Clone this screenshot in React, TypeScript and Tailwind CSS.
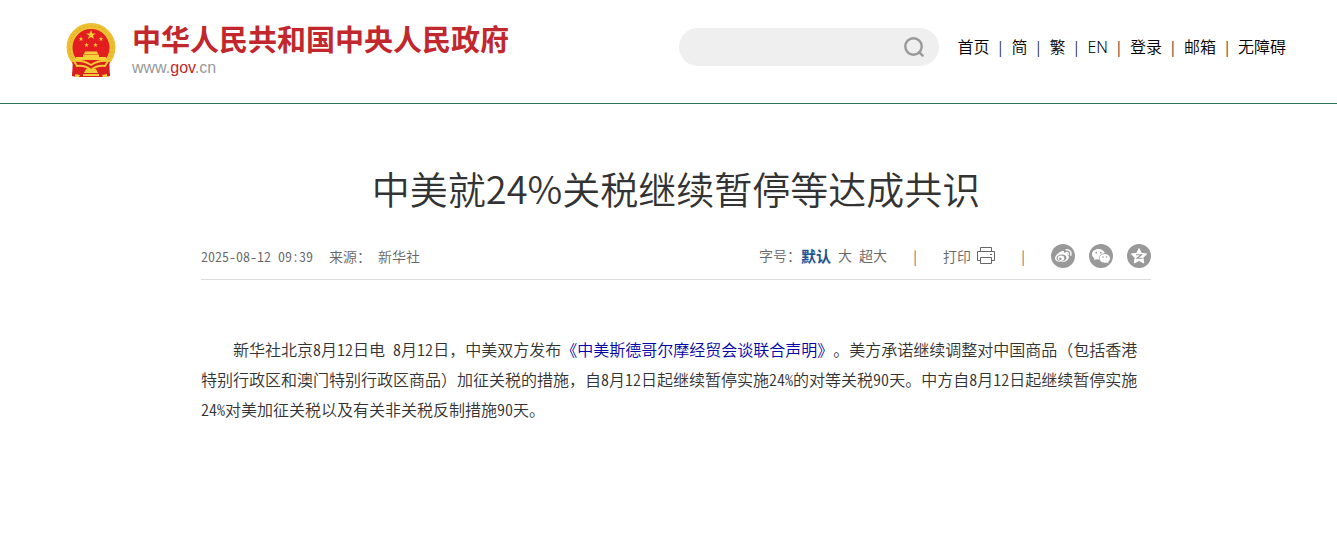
import type { ReactNode } from "react";

const navItems = ["首页", "简", "繁", "EN", "登录", "邮箱", "无障碍"];

const fontSizes = [
  { label: "默认", active: true },
  { label: "大", active: false },
  { label: "超大", active: false },
];

function star(cx: number, cy: number, r: number) {
  return Array.from({ length: 10 }, (_, i) => {
    const radius = i % 2 === 0 ? r : r * 0.4;
    const angle = (Math.PI / 5) * i - Math.PI / 2;
    return `${cx + radius * Math.cos(angle)},${cy + radius * Math.sin(angle)}`;
  }).join(" ");
}

// Digits, latin and spaces take half the width of a Chinese character
function HalfWidth({ text }: { text: string }) {
  return text.split(/([\d%:\- ]+)/).map((part, index) =>
    index % 2 === 1 ? (
      <span key={index} className="[font-feature-settings:'hwid']">
        {part}
      </span>
    ) : (
      part
    ),
  );
}

function Emblem() {
  return (
    <svg width="50" height="54" viewBox="0 0 50 54" aria-hidden="true" className="shrink-0">
      <path d="M7 36 L6 53 L13 54 L37 54 L44 53 L43 36Z" fill="#d81e1f" />
      <circle cx="25" cy="24.5" r="21.500" fill="#e41e20" stroke="#edc032" strokeWidth="6" />
      <circle cx="25" cy="24.5" r="21.500" fill="none" stroke="#dda824" strokeWidth="1" strokeDasharray="2 2" />
      <g fill="#f6d23a">
        <polygon points={star(25, 12, 5)} />
        <polygon points={star(15, 16, 2.4)} />
        <polygon points={star(35, 16, 2.4)} />
        <polygon points={star(20.5, 22, 2.4)} />
        <polygon points={star(29.5, 22, 2.4)} />
        <path d="M19 28.500 H31 L32 31 H18Z M17 31.500 H33 V35 H17Z M10 34 H40 V37 H10Z" />
      </g>
      <path d="M6 39 Q16 36 25 41 Q34 36 44 39 L42 44 L44 53 L37 54 H13 L6 53 L8 44Z" fill="#d81e1f" />
      <path
        d="M8 38 Q17 37 25 42 Q33 37 42 38 L39 43 Q31 42 25 47 Q19 42 11 43Z"
        fill="none"
        stroke="#f3cb35"
        strokeWidth="2"
      />
      <path d="M20 46 H30 L32 50 H18Z M17 51 H33 V53 H17Z M9 51 L14 52 L13 54 H9Z M41 51 L36 52 L37 54 H41Z" fill="#f3cb35" />
    </svg>
  );
}

function SearchIcon() {
  return (
    <svg width="20" height="20" viewBox="0 0 20 20" fill="none" stroke="#999" strokeWidth="2.400" aria-hidden="true">
      <circle cx="9.500" cy="9.500" r="8.200" />
      <path d="M15.200 15.200 L18.600 18.600" strokeLinecap="round" />
    </svg>
  );
}

function PrinterIcon() {
  return (
    <svg width="18" height="18" viewBox="0 0 18 18" fill="none" stroke="#666" strokeWidth="1" aria-hidden="true">
      <path d="M3.500 4.500 V0.500 H14.500 V4.500 M3.500 13.500 H0.500 V4.500 H17.500 V13.500 H14.500" />
      <path d="M3.500 10.500 H14.500 V16.500 H3.500Z" />
      <path d="M13 7.500 H15" />
    </svg>
  );
}

function WeiboIcon() {
  return (
    <>
      <path
        d="M10.600 7.300 C12.200 6.500 13.600 7 13.200 9 C15.200 8.300 16.700 9 16.100 10.800 C18.500 11.800 18.200 14.200 16.400 15.900 C13.300 18.800 6.500 18.900 4.300 15.700 C2.700 13.200 6.700 8.800 10.600 7.300Z"
        fill="#fff"
      />
      <ellipse cx="10.500" cy="14" rx="5" ry="3.500" fill="#999" transform="rotate(-8 10.500 14)" />
      <ellipse cx="10" cy="14.200" rx="3.200" ry="2.700" fill="#fff" />
      <circle cx="9.300" cy="14.700" r="1.300" fill="#999" />
      <path
        d="M15.300 8.600 C16.700 8.300 17.600 9.300 17.200 10.600 M15.200 5.800 C18.500 5.300 20.700 8 19.700 11.200"
        fill="none"
        stroke="#fff"
        strokeWidth="1.400"
        strokeLinecap="round"
      />
    </>
  );
}

function WechatIcon() {
  return (
    <>
      <path
        d="M9.500 5 C5.800 5 3 7.300 3 10.300 C3 12 3.900 13.500 5.400 14.400 L4.900 16.300 L7.100 15.200 C8.300 15.500 9.300 15.600 10.200 15.500 C9.300 12.200 12 9.200 15.900 9.200 C15.200 6.700 12.700 5 9.500 5Z"
        fill="#fff"
      />
      <path
        d="M15.800 9.900 C12.800 9.900 10.500 11.900 10.500 14.300 C10.500 16.800 12.800 18.700 15.800 18.700 C16.500 18.700 17.200 18.600 17.800 18.400 L19.600 19.300 L19.200 17.700 C20.400 16.900 21 15.700 21 14.300 C21 11.900 18.700 9.900 15.800 9.900Z"
        fill="#fff"
      />
      <g fill="#999">
        <circle cx="7.300" cy="8.700" r="0.900" />
        <circle cx="11.700" cy="8.700" r="0.900" />
        <circle cx="14" cy="13" r="0.800" />
        <circle cx="17.600" cy="13" r="0.800" />
      </g>
    </>
  );
}

function QzoneIcon() {
  return (
    <>
      <path
        d="M12 4.500 L14.300 9.300 L19.600 10 L15.800 13.700 L16.800 19 L12 16.500 L7.200 19 L8.200 13.700 L4.400 10 L9.700 9.300Z"
        fill="#fff"
        stroke="#fff"
        strokeWidth="1"
        strokeLinejoin="round"
      />
      <path d="M9 10.800 H14.600 L10 14.200 H15.400" fill="none" stroke="#999" strokeWidth="1.100" />
    </>
  );
}

function ShareButton({ label, children }: { label: string; children: ReactNode }) {
  return (
    <button type="button" aria-label={label} className="cursor-pointer">
      <svg width="24" height="24" viewBox="0 0 24 24" aria-hidden="true">
        <circle cx="12" cy="12" r="12" fill="#999" />
        {children}
      </svg>
    </button>
  );
}

function Header() {
  return (
    <header className="border-b border-[#2d7355] pl-[15px]">
      <div className="mx-auto flex h-[103px] max-w-[1220px] items-start justify-between">
        <a href="#" className="flex items-center gap-4 pt-5">
          <Emblem />
          <span className="flex flex-col">
            <span className="text-[29px] leading-9 font-bold whitespace-nowrap text-[#c1272d]">
              中华人民共和国中央人民政府
            </span>
            <span className="font-['Liberation_Sans'] text-base leading-6 text-[#999]">
              www.<span className="text-[#c1272d]">gov</span>.cn
            </span>
          </span>
        </a>
        <div className="flex items-center gap-[18px] pt-7">
          <form role="search" className="flex h-[38px] w-[260px] items-center rounded-full bg-[#efefef] pr-[15px] pl-5">
            <input type="text" aria-label="搜索" className="min-w-0 flex-1 bg-transparent outline-none" />
            <button type="button" aria-label="搜索" className="cursor-pointer">
              <SearchIcon />
            </button>
          </form>
          <nav>
            <ul className="flex font-['Noto_Sans','Noto_Sans_CJK_SC',sans-serif] text-base font-[350] text-black">
              {navItems.map((item, index) => (
                <li key={item} className="flex whitespace-nowrap">
                  {index > 0 && <span className="w-[22px] text-center">|</span>}
                  <a href="#">{item}</a>
                </li>
              ))}
            </ul>
          </nav>
        </div>
      </div>
    </header>
  );
}

function ArticleMeta() {
  return (
    <div className="flex h-12 items-center justify-between border-b border-[#ddd] text-sm font-[350] text-[#666]">
      <p className="flex gap-4">
        <time dateTime="2025-08-12T09:39">
          <HalfWidth text="2025-08-12 09:39" />
        </time>
        <span>
          <HalfWidth text="来源： 新华社" />
        </span>
      </p>
      <div className="flex items-center">
        <div className="flex items-center">
          字号：
          <span className="flex items-center gap-[7px]">
            {fontSizes.map((size) => (
              <button
                key={size.label}
                type="button"
                className={size.active ? "text-[15px] font-bold text-[#1e5494]" : "cursor-pointer"}
              >
                {size.label}
              </button>
            ))}
          </span>
        </div>
        <span className="w-14 text-center">|</span>
        <button type="button" className="flex items-center gap-1.5">
          打印
          <PrinterIcon />
        </button>
        <span className="w-14 text-center">|</span>
        <div className="flex items-center gap-[14px]">
          <ShareButton label="微博">
            <WeiboIcon />
          </ShareButton>
          <ShareButton label="微信">
            <WechatIcon />
          </ShareButton>
          <ShareButton label="QQ空间">
            <QzoneIcon />
          </ShareButton>
        </div>
      </div>
    </div>
  );
}

export default function App() {
  return (
    <div className="min-h-screen bg-white font-['Noto_Sans_CJK_SC',sans-serif] [text-spacing-trim:space-all]">
      <Header />
      <main className="pl-[15px]">
        <article className="mx-auto max-w-[950px] pt-14">
          <h1 className="text-center text-[38px] leading-[56px] font-[350] text-[#333]">
            中美就24%关税继续暂停等达成共识
          </h1>
          <div className="pt-4">
            <ArticleMeta />
          </div>
          <p className="pt-[54px] indent-8 text-base leading-[30px] font-[350] text-[#333]">
            <HalfWidth text="新华社北京8月12日电 8月12日，中美双方发布" />
            <a href="#" className="text-[#0000aa]">
              《中美斯德哥尔摩经贸会谈联合声明》
            </a>
            <HalfWidth text="。美方承诺继续调整对中国商品（包括香港特别行政区和澳门特别行政区商品）加征关税的措施，自8月12日起继续暂停实施24%的对等关税90天。中方自8月12日起继续暂停实施24%对美加征关税以及有关非关税反制措施90天。" />
          </p>
        </article>
      </main>
    </div>
  );
}
